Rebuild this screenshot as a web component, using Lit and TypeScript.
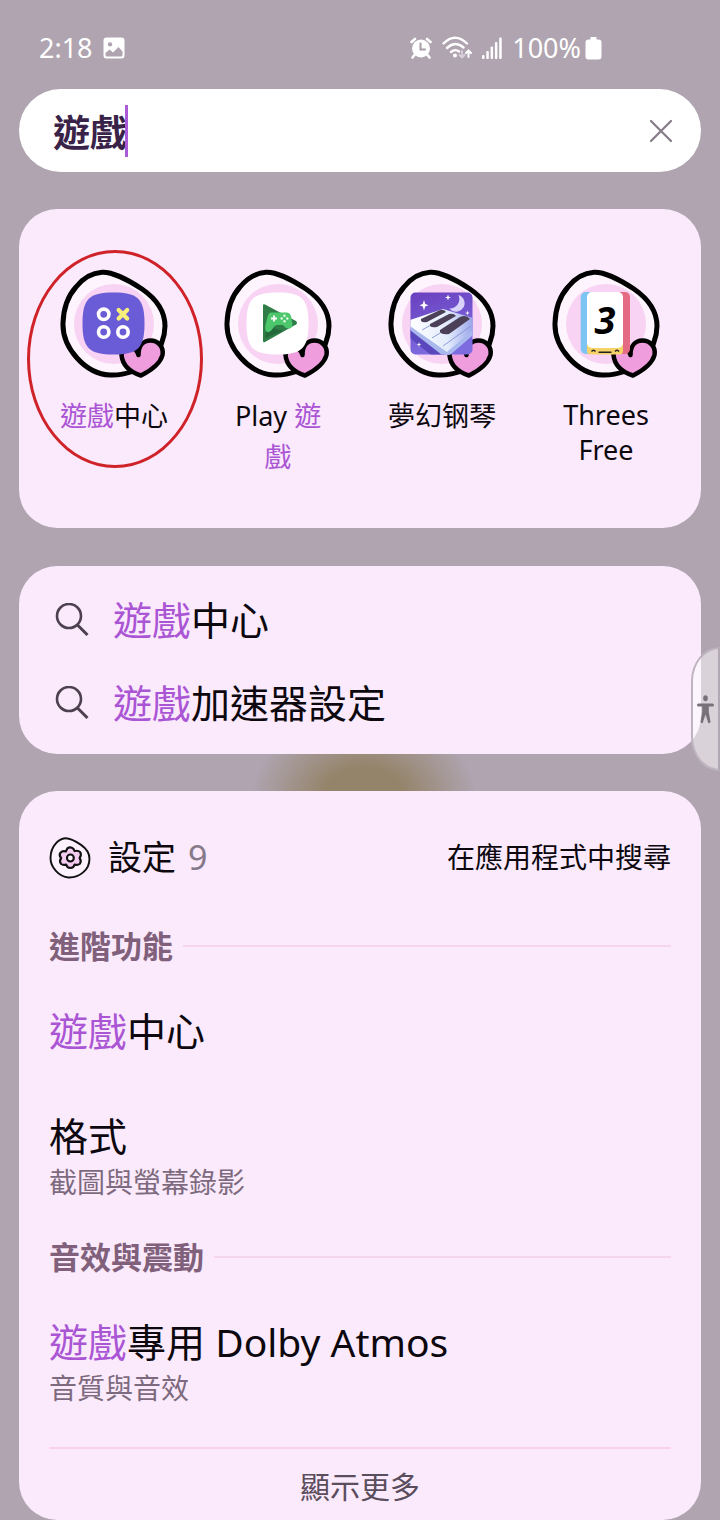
import { LitElement, html, svg, css, nothing } from "lit";
import { customElement, property, state } from "lit/decorators.js";

const QUERY = "遊戲";
const BLOB =
  "M43 3.300C52 2.800 68 10 83 20C96 29 106 42 106 57C106 67 102 82 90 92C80 101 66 106.500 51 106C38 105.500 27 99 18 89C9 79 3.500 67 4 54C4.500 40 8 28 17 18C25 8 33 4 43 3.300Z";

/** Splits a text around the search term and tints each hit. */
function highlight(text: string) {
  return text
    .split(QUERY)
    .map((part, i) => html`${i > 0 ? html`<mark>${QUERY}</mark>` : nothing}${part}`);
}

const markStyles = css`
  * {
    box-sizing: border-box;
  }
  mark {
    background: none;
    color: #aa55d4;
  }
  button {
    font: inherit;
    color: inherit;
    background: none;
    border: 0;
    padding: 0;
    margin: 0;
    cursor: pointer;
  }
  svg {
    display: block;
    flex: none;
  }
`;

const art: Record<string, unknown> = {
  center: svg`
    <path d="M54.500 23.500C79 23.500 85.500 30 85.500 54.500S79 85.500 54.500 85.500S23.500 79 23.500 54.500S30 23.500 54.500 23.500Z" fill="#6a5bd6"/>
    <g fill="none" stroke="#fff" stroke-width="3.600">
      <circle cx="44.700" cy="45.300" r="5.200"/><circle cx="44.700" cy="63" r="5.200"/><circle cx="64" cy="63" r="5.200"/>
    </g>
    <path d="M59.600 41l8.600 8.600M68.200 41l-8.600 8.600" stroke="#f8ee7c" stroke-width="4.200" stroke-linecap="round"/>`,
  play: svg`
    <path d="M54.500 23.500C79 23.500 85.500 30 85.500 54.500S79 85.500 54.500 85.500S23.500 79 23.500 54.500S30 23.500 54.500 23.500Z" fill="#fff"/>
    <path d="M40 36.600Q40 34.600 42 35.400L73 52Q75 54 73 55.600L42 73Q40 74 40 72Z" fill="#2f7d46"/>
    <path d="M42 69L44 57L60 62Z" fill="#24683a"/>
    <path d="M48 43.500H64Q67.500 44 68.300 48.500L69.300 55Q69.500 59.500 65.500 59.500Q62.500 59.500 60 56H54.500Q51.500 56 49.500 60Q47 64 44 63Q41.500 61.500 42.500 56L44.500 48Q45.500 43.500 48 43.500Z" fill="#4cc76c"/>
    <path d="M51 46.500v6M48 49.500h6" stroke="#fff" stroke-width="1.800"/>
    <g fill="#e7fbe9"><circle cx="61.500" cy="46.700" r="1.200"/><circle cx="61.500" cy="52.300" r="1.200"/><circle cx="58.700" cy="49.500" r="1.200"/><circle cx="64.300" cy="49.500" r="1.200"/></g>`,
  piano: svg`
    <defs>
      <linearGradient id="night" x1="0" y1="0" x2="0.3" y2="1">
        <stop offset="0" stop-color="#6a3fbe"/><stop offset="1" stop-color="#7d6be0"/>
      </linearGradient>
      <linearGradient id="keys" x1="0" y1="0" x2="1" y2="0">
        <stop offset="0" stop-color="#fff"/><stop offset="0.6" stop-color="#e3ecfc"/><stop offset="1" stop-color="#9aa5ea"/>
      </linearGradient>
      <clipPath id="tile"><rect x="23.500" y="23.500" width="62" height="62" rx="5"/></clipPath>
    </defs>
    <g clip-path="url(#tile)">
      <rect x="23" y="23" width="63" height="63" fill="url(#night)"/>
      <path d="M23 60L62 86H44L23 69Z" fill="#5a46bd"/>
      <path d="M23 51L56 40L86 49V66L62 86H58L23 59Z" fill="url(#keys)"/>
      <path d="M23 57L60 83L86 61V66L63 86H55L23 61Z" fill="#a9b9ee"/>
      <path d="M35 61L62 46M45 69L74 51M56 77L84 57" stroke="#8393d3" stroke-width="0.900"/>
      <path d="M34 50L53 41Q57 40 59 43L40 53Q36 54 34 52Z" fill="#4b4058"/>
      <path d="M43 55L62 45Q67 44 69 47L50 58Q45 59 43 57Z" fill="#4b4058"/>
      <path d="M53 61L73 48Q79 45 83 50L62 65Q55 66 53 63Z" fill="#4b4058"/>
      <path d="M71.500 26A8.500 8.500 0 1 1 62.500 39.500A9.500 9.500 0 0 0 71.500 26Z" fill="#d9d2fb"/>
      <path d="M37 31l1.200 4l3.300 1.200l-3.300 1.200L37 41.500l-1.200-4.100l-3.300-1.200l3.300-1.200ZM61 25.500l.8 2.200l2.200.8l-2.200.8l-.8 2.200l-.8-2.200l-2.200-.8l2.200-.8ZM80.500 41.500l.6 1.900l1.900.6l-1.900.6l-.6 1.900l-.6-1.900l-1.900-.6l1.900-.6ZM32 73l.6 1.900l1.900.6l-1.900.6l-.6 1.900l-.6-1.900l-1.900-.6l1.900-.6Z" fill="#fff"/>
    </g>`,
  threes: svg`
    <rect x="29.700" y="23" width="26" height="62" rx="5" fill="#7cc4f2"/>
    <rect x="53" y="23" width="26" height="62" rx="5" fill="#e56b84"/>
    <path d="M36 72H72V82Q72 85.500 68 85.500H40Q36 85.500 36 82Z" fill="#f7d268"/>
    <rect x="36" y="23" width="36" height="56" rx="5" fill="#fff"/>
    <path d="M40.500 82.500q2-2.600 4 0M64 82.500q2-2.600 4 0M47.500 83.200h13" fill="none" stroke="#222" stroke-width="1.400"/>
    <text x="54" y="65" text-anchor="middle" class="digit">3</text>`,
};

@customElement("app-tile")
class AppTile extends LitElement {
  @property() icon = "";
  @property() label = "";

  static styles = [
    markStyles,
    css`
      :host {
        display: block;
      }
      .tile {
        display: flex;
        flex-direction: column;
        align-items: center;
        gap: 16px;
        width: 100%;
      }
      .label {
        max-width: 110px;
        line-height: 41px;
      }
      .latin {
        padding-top: 2px;
        line-height: 35px;
      }
      .digit {
        font: italic 700 38px "Noto Sans", sans-serif;
        fill: #000;
      }
    `,
  ];

  render() {
    const latin = /^[\x20-\x7e]+$/.test(this.label);
    return html`<button class="tile">
      <svg width="110" height="110" viewBox="0 0 110 110" aria-hidden="true">
        <path d=${BLOB} fill="#fdf4fe" />
        <circle cx="55" cy="55" r="40" fill="#f8d3f3" />
        <path d=${BLOB} fill="none" stroke="#000" stroke-width="5" />
        <path
          d="M79.500 86C79.500 77 84 71.500 91.500 71.500C99 71.500 105 78 103.500 86C101 95.500 92 101.500 82 106.500C71 103 63.500 96 62.500 86C63 79 76 74 79.500 86Z"
          fill="#ef9ddd" stroke="#000" stroke-width="4.500" stroke-linejoin="round"
        />
        ${art[this.icon]}
      </svg>
      <span class="label ${latin ? "latin" : ""}">${highlight(this.label)}</span>
    </button>`;
  }
}

interface Entry {
  title: string;
  sub?: string;
}

@customElement("app-root")
class AppRoot extends LitElement {
  @state() private query = QUERY;

  private apps = [
    { icon: "center", label: "遊戲中心" },
    { icon: "play", label: "Play 遊戲" },
    { icon: "piano", label: "夢幻钢琴" },
    { icon: "threes", label: "Threes Free" },
  ];

  private suggestions = ["遊戲中心", "遊戲加速器設定"];

  private sections: { name: string; entries: Entry[] }[] = [
    { name: "進階功能", entries: [{ title: "遊戲中心" }, { title: "格式", sub: "截圖與螢幕錄影" }] },
    { name: "音效與震動", entries: [{ title: "遊戲專用 Dolby Atmos", sub: "音質與音效" }] },
  ];

  static styles = [
    markStyles,
    css`
      :host {
        display: block;
        position: relative;
        min-height: 100vh;
        padding: 0 19px;
        font: 27px/41px "Noto Sans", "Noto Sans CJK TC", sans-serif;
        color: #0c080e;
        background: radial-gradient(ellipse 112px 84px at 364px 797px, #94846a 35%, #94846a00) #afa4b0;
      }
      h2,
      h3 {
        margin: 0;
        font-weight: inherit;
      }
      .status {
        display: flex;
        align-items: center;
        justify-content: space-between;
        height: 89px;
        padding: 6px 99px 0 20px;
        color: #fff;
      }
      .group {
        display: flex;
        align-items: center;
        gap: 10px;
      }
      .battery {
        display: flex;
        align-items: center;
        gap: 4px;
      }
      .search {
        display: flex;
        align-items: center;
        height: 83px;
        padding: 0 28px 0 34px;
        border-radius: 42px;
        background: #fff;
      }
      .field {
        position: relative;
        flex: 1;
        min-width: 0;
        font-size: 37px;
      }
      .field input {
        display: block;
        width: 100%;
        height: 52px;
        padding: 0;
        border: 0;
        outline: 0;
        background: none;
        font: inherit;
        font-weight: 700;
        color: #3a2348;
      }
      .caret {
        position: absolute;
        left: 72px;
        top: 0;
        bottom: 0;
        width: 3px;
        background: #aa5bd8;
      }
      .card {
        border-radius: 38px;
        background: #faeafc;
      }
      .apps {
        position: relative;
        display: grid;
        grid-template-columns: repeat(4, 1fr);
        margin-top: 37px;
        padding: 60px 13px 51px;
      }
      .ring {
        position: absolute;
        left: 8px;
        top: 41px;
        width: 176px;
        height: 218px;
        border: 3px solid #cf2229;
        border-radius: 50%;
        pointer-events: none;
      }
      .suggestions {
        margin-top: 38px;
        padding: 12px 36px 10px;
      }
      .suggestion {
        display: flex;
        align-items: center;
        gap: 24px;
        width: 100%;
        height: 83px;
        font-size: 39px;
      }
      .settings {
        margin-top: 37px;
        padding: 35px 30px 0;
      }
      .head {
        display: flex;
        align-items: center;
        height: 63px;
      }
      .head h2 {
        margin-left: 17px;
        font-size: 34px;
      }
      .count {
        margin-left: 12px;
        font-size: 34px;
        color: #85798a;
      }
      .head a {
        margin-left: auto;
        font-size: 28px;
        color: inherit;
        text-decoration: none;
      }
      .section {
        display: flex;
        align-items: center;
        gap: 10px;
        height: 44px;
        margin-top: 35px;
        color: #80607a;
      }
      .section h3 {
        font-size: 31px;
        font-weight: 700;
      }
      .section::after {
        content: "";
        flex: 1;
        height: 2px;
        background: #f6d6ee;
      }
      .entry {
        display: block;
        width: 100%;
        margin-top: 35px;
        text-align: left;
      }
      .entry + .entry {
        margin-top: 49px;
      }
      .title {
        display: block;
        font-size: 39px;
        line-height: 56px;
      }
      .sub {
        display: block;
        font-size: 28px;
        line-height: 36px;
        color: #7e6a7e;
      }
      .more {
        width: 100%;
        height: 73px;
        margin-top: 41px;
        padding-top: 3px;
        border-top: 2px solid #fad0ec;
        font-size: 30px;
        color: #5a4d5c;
      }
      .edge {
        position: absolute;
        right: 0;
        top: 647px;
        display: flex;
        align-items: center;
        justify-content: center;
        width: 29px;
        height: 124px;
        border: 2px solid #bdb4bf;
        border-right-color: #b0a8b2;
        border-radius: 29px 0 0 29px / 34px 0 0 34px;
        background: rgb(255 255 255 / 0.52);
      }
    `,
  ];

  private onInput(e: Event) {
    this.query = (e.target as HTMLInputElement).value;
  }

  render() {
    return html`
      <header class="status">
        <div class="group">
          <span>2:18</span>
          <svg width="22" height="22" viewBox="0 0 22 22" aria-hidden="true">
            <path fill="#fff" fill-rule="evenodd" d="M3.500 0.500h15q3 0 3 3v15q0 3-3 3h-15q-3 0-3-3v-15q0-3 3-3ZM2.500 18q0 1.500 1.500 1.500h14q1.500 0 1.500-1.500v-3.500l-4-4.500l-5.500 5.500l-3.500-3l-4 3.500ZM7 5.200a2.200 2.200 0 1 0 .01 0Z" />
          </svg>
        </div>
        <div class="group">
          <svg width="22" height="22" viewBox="0 0 22 22" fill="none" stroke="#fff" stroke-linecap="round" aria-hidden="true">
            <circle cx="11" cy="11.500" r="9" fill="#fff" stroke="none" />
            <path d="M1.500 5L5 2M20.500 5L17 2M4.500 18L2.500 20.500M17.500 18L19.500 20.500" stroke-width="2.600" />
            <path d="M10.500 6.500v6h4.500" stroke="#a79ca8" stroke-width="2" />
          </svg>
          <svg width="30" height="24" viewBox="0 0 30 24" fill="none" stroke="#fff" stroke-width="2.400" stroke-linecap="round" aria-hidden="true">
            <path d="M1.500 7.500Q13 -4 25 7.500M5 12Q13 4.500 21.500 11.500M9 16Q13 12.500 17 15.500" />
            <circle cx="13" cy="19.500" r="2" fill="#fff" stroke="none" />
            <path d="M20 15v6.500m-2.500-2.500l2.500 2.500l2.500-2.500" stroke="#d8d0da" stroke-width="1.800" />
            <path d="M26.500 21v-6.500m-2.500 2.500l2.500-2.500l2.500 2.500" stroke-width="2" />
          </svg>
          <svg width="20" height="22" viewBox="0 0 20 22" fill="#fff" aria-hidden="true">
            <rect x="0" y="18" width="2.500" height="4" rx="1" /><rect x="4.300" y="14" width="2.500" height="8" rx="1" />
            <rect x="8.600" y="9.500" width="2.500" height="12.500" rx="1" /><rect x="12.900" y="5" width="2.500" height="17" rx="1" />
            <rect x="17.200" y="0.500" width="2.500" height="21.500" rx="1" />
          </svg>
          <span class="battery">100%
            <svg width="17" height="24" viewBox="0 0 17 24" fill="#fff" aria-hidden="true">
              <path d="M5.500 1h6v2.500h2q3 0 3 3v14q0 3-3 3h-10q-3 0-3-3v-14q0-3 3-3h2Z" />
            </svg>
          </span>
        </div>
      </header>

      <div class="search">
        <div class="field">
          <input type="text" aria-label="搜尋" .value=${this.query} @input=${this.onInput} />
          <span class="caret"></span>
        </div>
        <button aria-label="清除" @click=${() => (this.query = "")}>
          <svg width="24" height="24" viewBox="0 0 24 24" stroke="#857b88" stroke-width="2.200" stroke-linecap="round">
            <path d="M2 2L22 22M22 2L2 22" />
          </svg>
        </button>
      </div>

      <section class="card apps">
        ${this.apps.map((a) => html`<app-tile icon=${a.icon} label=${a.label}></app-tile>`)}
        <span class="ring"></span>
      </section>

      <section class="card suggestions">
        ${this.suggestions.map(
          (s) => html`<button class="suggestion">
            <svg width="34" height="34" viewBox="0 0 34 34" fill="none" stroke="#4d414f" stroke-width="2.600" aria-hidden="true">
              <circle cx="14" cy="13" r="12" />
              <path d="M22.500 22L32.500 32" stroke-width="3" />
            </svg>
            <span>${highlight(s)}</span>
          </button>`
        )}
      </section>

      <section class="card settings">
        <div class="head">
          <svg width="42" height="42" viewBox="0 0 110 110" aria-hidden="true">
            <path d=${BLOB} fill="#fdf2fe" stroke="#111" stroke-width="5" />
            <g transform="translate(56 55)" stroke="#111" stroke-width="5.500" stroke-linejoin="round">
              <path fill="#f6cdf2" d="M-8 -25Q0 -31 8 -24L11 -18Q20 -21 26 -15Q30 -7 24 0Q30 8 25 15Q19 20 11 17Q9 26 0 26Q-9 26 -11 17Q-19 20 -25 15Q-30 8 -24 0Q-31 -6 -26 -14Q-20 -20 -12 -17Z" />
              <circle r="9" fill="#fdf2fe" />
            </g>
          </svg>
          <h2>設定</h2>
          <span class="count">9</span>
          <a href="#search">在應用程式中搜尋</a>
        </div>
        ${this.sections.map(
          (s) => html`
            <div class="section"><h3>${s.name}</h3></div>
            ${s.entries.map(
              (e) => html`<button class="entry">
                <span class="title">${highlight(e.title)}</span>
                ${e.sub ? html`<span class="sub">${e.sub}</span>` : nothing}
              </button>`
            )}
          `
        )}
        <button class="more">顯示更多</button>
      </section>

      <button class="edge" aria-label="協助工具">
        <svg width="17" height="29" viewBox="0 0 17 29" fill="#77717a" aria-hidden="true">
          <ellipse cx="8.500" cy="3.200" rx="2.300" ry="3" />
          <path d="M1.500 8.500h14q1.500 0 1.500 1.500t-1.500 1.600h-3.700v5.400l1.700 10q-.5 1.500-2.200 1l-2.800-8.500l-2.800 8.500q-1.700.5-2.200-1l1.700-10v-5.400h-3.700q-1.500 0-1.500-1.600t1.500-1.500Z" />
        </svg>
      </button>
    `;
  }
}
